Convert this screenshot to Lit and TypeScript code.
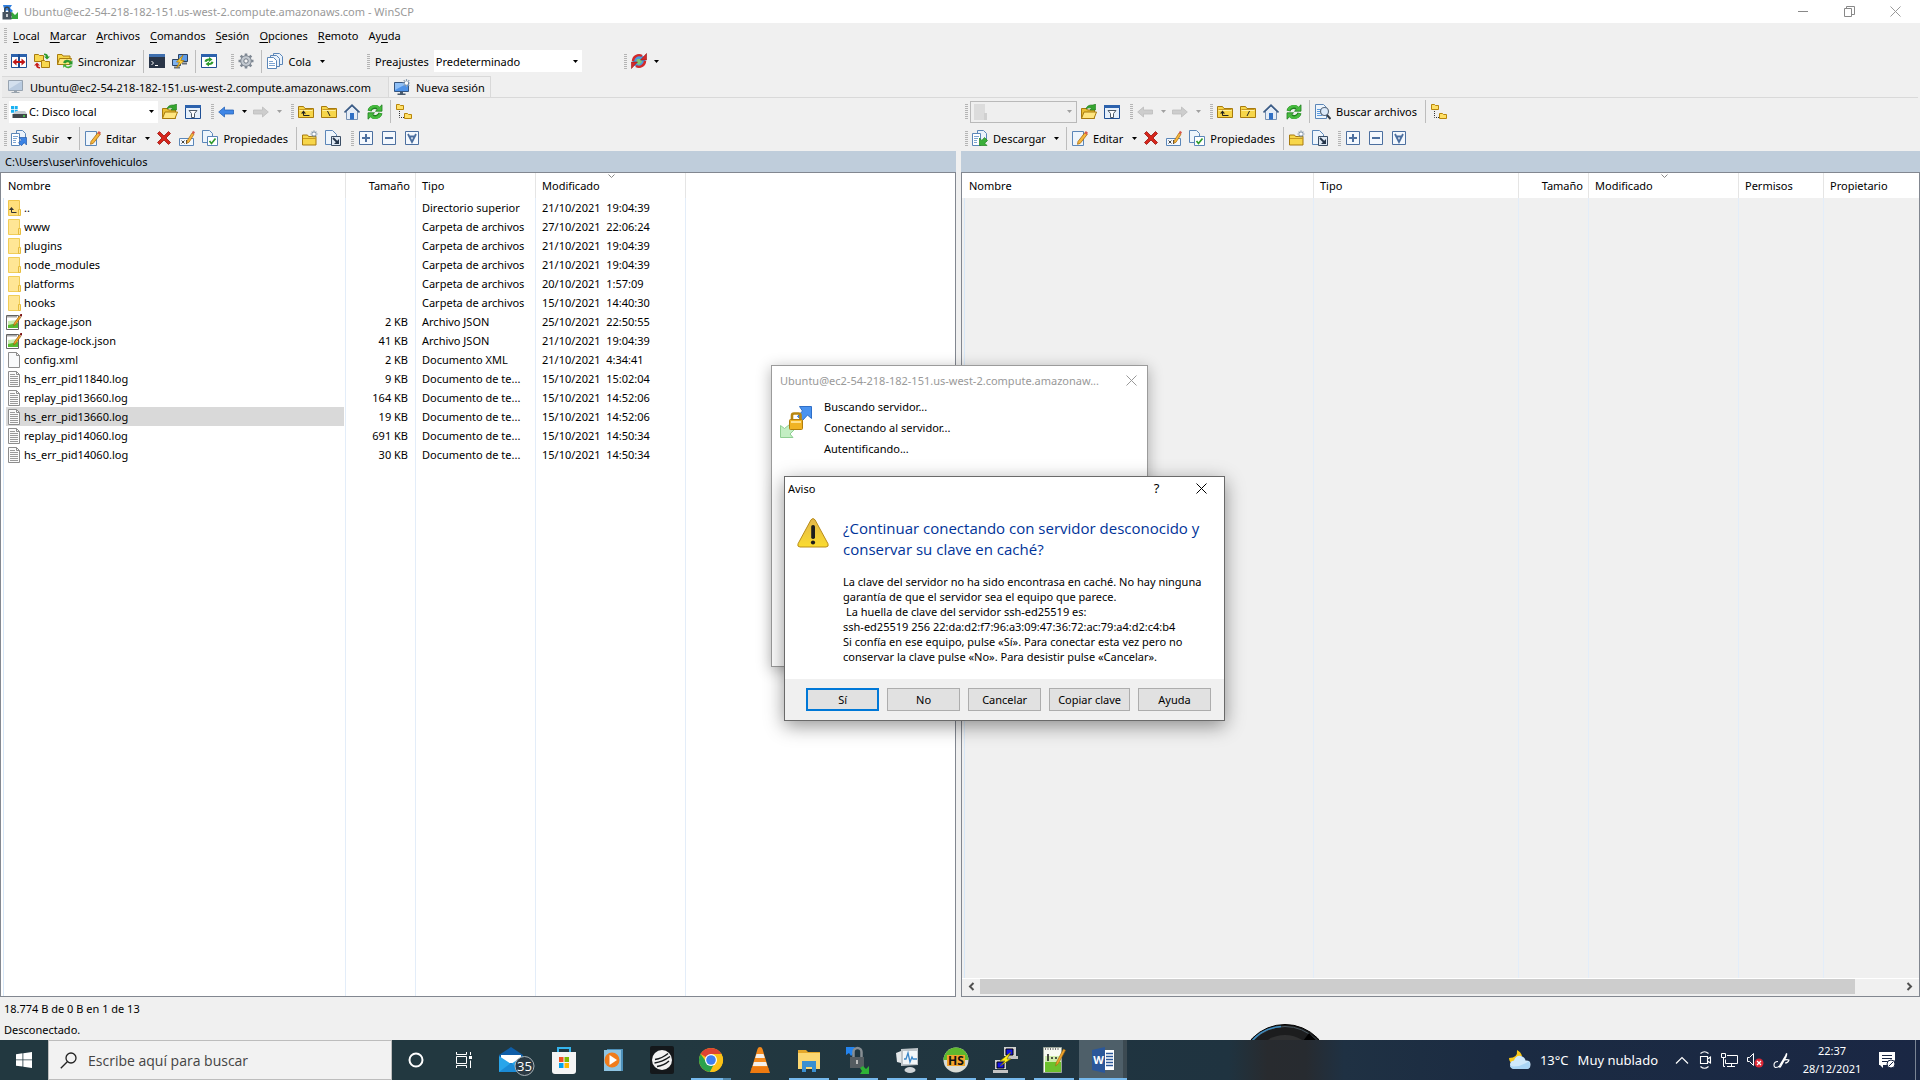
import { LitElement, html, svg, css, nothing, TemplateResult, SVGTemplateResult } from "lit";
import { customElement } from "lit/decorators.js";
import { classMap } from "lit/directives/class-map.js";

/* ---------- icon artwork, one entry per 16x16 glyph ---------- */

const folderBody = svg`<path d="M.5 13.5v-11h5l1.500 2h8.500v9z" fill="#f7d64a" stroke="#a87b0e"/><path d="M1.500 6.500h13" stroke="#fff0a0"/><path d="M1.500 5.500h13" stroke="#c99a1e"/>`;
const miniFolder = (x: number, y: number) =>
  svg`<path d="M${x + 0.5} ${y + 5.5}v-5h3l1 1h3v4z" fill="#ffe066" stroke="#b8860b"/>`;
const pencil = svg`<path d="M6 11.500l7-9 2.300 1.800-7 9-2.800 1z" fill="#f6b73c" stroke="#a9690d" stroke-width=".8"/><path d="M12.500 3l1.300-2 2.200 1.800-1.400 1.900z" fill="#d9584b"/>`;
const monitorBlue = svg`<path d="M.5 3.500h14v9H.5z" fill="#4f93e8" stroke="#35557f"/><path d="M1 4h13L1 11z" fill="#8fc0f7"/><path d="M6 13h3v1.500h2.500V16h-8v-1.500H6z" fill="#4a5b6e"/>`;
const cycle = (fill: string, edge: string) => svg`
  <path d="M2.500 7A5.500 5 0 0 1 11 4" fill="none" stroke="${edge}" stroke-width="4"/>
  <path d="M13.500 9A5.500 5 0 0 1 5 12" fill="none" stroke="${edge}" stroke-width="4"/>
  <path d="M15 .8v6.400H8.500z" fill="${fill}" stroke="${edge}" stroke-width=".8"/>
  <path d="M1 15.200V8.800h6.500z" fill="${fill}" stroke="${edge}" stroke-width=".8"/>
  <path d="M2.500 6.500A5.500 5 0 0 1 12 4" fill="none" stroke="${fill}" stroke-width="2.600"/>
  <path d="M13.500 9.500A5.500 5 0 0 1 4 12" fill="none" stroke="${fill}" stroke-width="2.600"/>`;

const icons: Record<string, SVGTemplateResult> = {
  app: svg`<path d="M1 1h9L8 4l3 3-3 2-3-3-2 2z" fill="#2f7fe0"/><path d="M16 15H8l2-2-2-3 2-2 3 3 3-3z" fill="#35a83c"/><path d="M2.800 8V5.500a2.200 2.200 0 0 1 4.400 0V8" fill="none" stroke="#3b4650" stroke-width="1.500"/><path d="M.5 8h9v7.500h-9z" fill="#46525e"/><path d="M4.300 10h1.400v3H4.300z" fill="#fff"/>`,
  compare: svg`<path d="M.5 1.500h15v13H.5z" fill="#fff" stroke="#1f4f94"/><path d="M0 1h16v3H0z" fill="#2c62ad"/><path d="M8 1v14" stroke="#1f4f94" stroke-width="2"/><path d="M1.500 9l4-3.500V8h5V5.500l4 3.500-4 3.500V10h-5v2.500z" fill="#c11616"/>`,
  syncFolders: svg`<path d="M.5 8.500v-7h4l1 1h4v6z" fill="#f8d84f" stroke="#a87b0e"/><path d="M7.500 14.500v-7h3l1 1h4v6z" fill="#f8d84f" stroke="#a87b0e"/><path d="M10 .5q4 0 4 3h2l-3 3-3-3h2q0-1.500-2-1.500z" fill="#2c9a2c"/><path d="M6 15.500q-4 0-4-3H0l3-3 3 3H4q0 1.500 2 1.500z" fill="#c81d1d"/>`,
  syncFolder: svg`<path d="M.5 11.500v-10h4.500l1 1.500h7v8.500z" fill="#f7d64a" stroke="#a87b0e"/><path d="M.5 11.500l2-6h12l-2 6z" fill="#ffe680" stroke="#a87b0e"/><path d="M6 9.500a4.500 4 0 0 1 8-1l1.500-1v4h-4l1.300-1.300a2.800 2.800 0 0 0-4.600.3z" fill="#2c9a2c"/><path d="M15.500 12.500a4.500 4 0 0 1-8 1L6.200 15v-3.500h4l-1.300 1.200a2.800 2.800 0 0 0 4.300-.2z" fill="#42b23b"/>`,
  terminal: svg`<path d="M0 1h16v14H0z" fill="#2a3547"/><path d="M0 1h16v3H0z" fill="#3f6fae"/><path d="M2.500 8l2 2-2 2M6 12.500h3" fill="none" stroke="#fff"/>`,
  putty: svg`<path d="M6.500 1.500h9v7h-9z" fill="#5d9be8" stroke="#2b4364"/><path d="M.5 6.500h8v6h-8z" fill="#7db2f2" stroke="#2b4364"/><path d="M2 14.500h6M10 10.500h5" stroke="#66707c" stroke-width="2"/><path d="M11 2L4.500 9h3l-3 6L12 7.500H8.800z" fill="#ffd23c" stroke="#b07a00" stroke-width=".7"/>`,
  refreshBox: svg`<path d="M.5 1.500h15v13H.5z" fill="#fff" stroke="#1f4f94"/><path d="M0 1h16v3H0z" fill="#2c62ad"/><path d="M3.500 8.500q.5-3 4.500-3V4l3.500 2.500L8 9V7.500Q6 7.500 5.500 9z" fill="#2c9a2c"/><path d="M12.500 9q-.5 3-4.500 3v1.500L4.500 11 8 8.500V10q2 0 2.500-1.500z" fill="#2c9a2c"/>`,
  gear: svg`<path d="M8 .5v15M.5 8h15M2.700 2.700l10.600 10.600M13.300 2.700L2.700 13.300" stroke="#7f8893" stroke-width="2.600"/><circle cx="8" cy="8" r="5.300" fill="#c3c9d0" stroke="#7f8893"/><circle cx="8" cy="8" r="2.200" fill="#f5f5f5" stroke="#6f7985"/>`,
  queue: svg`<path d="M6.500 .5h6l3 3v8h-9z" fill="#eaf2fb" stroke="#5b86b8"/><path d="M3.500 2.500h6l3 3v8h-9z" fill="#eaf2fb" stroke="#5b86b8"/><path d="M.5 4.500h6l3 3v8h-9z" fill="#fff" stroke="#5b86b8"/><path d="M2 8.500h4M2 10.500h6M2 12.500h6" stroke="#7ea5d2"/>`,
  globe: svg`<circle cx="8" cy="8" r="6.500" fill="#4b9be0"/><path d="M6 6h4l1 3-3 3-3-2z" fill="#7ccc7a"/><path d="M2 8A6 6 0 0 1 11 3M14 8A6 6 0 0 1 5 13" fill="none" stroke="#d42a2a" stroke-width="2.400"/><path d="M15.500 .5v6.500H9.500zM.5 15.500V9h6z" fill="#d42a2a" stroke="#981515" stroke-width=".6"/>`,
  monitorGrey: svg`<path d="M.5 1.500h14v10H.5z" fill="#b9cbe0" stroke="#97a3b0"/><path d="M1 2h13L1 10z" fill="#d3e0ee"/><path d="M6 12h3v1h2.500v1h-8v-1H6z" fill="#9aa4ae"/>`,
  monitorNew: svg`${monitorBlue}<path d="M12.500 0v8M8.500 4h8M9.700 1.200l5.600 5.600M15.300 1.200L9.700 6.800" stroke="#8ea0b2" stroke-width="1.200"/><circle cx="12.500" cy="4" r="1.700" fill="#fff"/>`,
  disk: svg`<path d="M0 2h3v3H0zM3.700 2h3v3h-3zM0 5.700h3v3H0zM3.700 5.700h3v3h-3z" fill="#19b1f2"/><path d="M3 9l2-2h9l2 3H2z" fill="#c6cbd0"/><path d="M1.500 10H16v4H1.500z" fill="#41464b"/><path d="M12 12h2" stroke="#4be04b" stroke-width="1.500"/>`,
  diskOff: svg`<path d="M1 0h11v16H1z" fill="#dcdcdc"/><path d="M11 9h3v7h-3z" fill="#d0d0d0"/>`,
  folderOpen: svg`<path d="M.5 14.500v-10h5l1 1.500h7v8.500z" fill="#e9bf35" stroke="#a87b0e"/><path d="M.5 14.500l2.500-6.500h12.500l-2.500 6.500z" fill="#ffe680" stroke="#a87b0e"/><path d="M5 5Q6 .5 12 1l2.500-1v6H9l1.700-1.700Q8 3 5 5z" fill="#35a52f" stroke="#1f7a1d" stroke-width=".6"/>`,
  filter: svg`<path d="M.5 1.500h15v13H.5z" fill="#e6f0fb" stroke="#1f4f94"/><path d="M0 1h16v3H0z" fill="#2c62ad"/><path d="M4 6.500h8L9.500 9.500v4h-3v-4z" fill="#fff" stroke="#4d5a69"/>`,
  back: svg`<path d="M.7 8L6.500 3v3h9v4h-9v3z" fill="#3f86e6" stroke="#2864b8" stroke-width=".8"/>`,
  backOff: svg`<path d="M.7 8L6.500 3v3h9v4h-9v3z" fill="#cdcdcd" stroke="#bdbdbd" stroke-width=".8"/>`,
  fwdOff: svg`<path d="M15.300 8L9.500 3v3h-9v4h9v3z" fill="#cdcdcd" stroke="#bdbdbd" stroke-width=".8"/>`,
  folderUp: svg`${folderBody}<path d="M5.500 7.500v4h6" fill="none" stroke="#222"/><path d="M3 9.500l2.500-3 2.500 3z" fill="#222"/>`,
  folderRoot: svg`${folderBody}<path d="M6.500 7l2.500 5" stroke="#222"/>`,
  folderSlash: svg`${folderBody}<path d="M9.500 7L7 12" stroke="#222"/>`,
  home: svg`<path d="M2.500 7v8.500h11V7L8 2z" fill="#e4ecf6" stroke="#7791b3"/><path d="M6 9h4v6.500H6z" fill="#2f6fc4"/><path d="M.5 8.500L8 1.200l7.500 7.300" fill="none" stroke="#3c5c86" stroke-width="1.600"/>`,
  refresh: cycle("#46bb3e", "#1f7f1e"),
  tree: svg`${miniFolder(0, 0)}${miniFolder(8, 9)}<path d="M3.500 7v6.500H8" fill="none" stroke="#333" stroke-dasharray="1 1"/>`,
  upload: svg`<path d="M5.500 .5h6l3 3v8h-9z" fill="#eaf2fb" stroke="#5b86b8"/><path d="M.5 3.500h8v12h-8z" fill="#fff" stroke="#5b86b8"/><path d="M2 6.500h5M2 8.500h4M2 10.500h3M2 12.500h3" stroke="#7ea5d2"/><path d="M8 7.500h7.500V15l-2.300-2.300-2.700 3-3-3 3-2.700z" fill="#3a82e4" stroke="#2359a8" stroke-width=".7"/>`,
  download: svg`<path d="M5.500 .5h6l3 3v8h-9z" fill="#eaf2fb" stroke="#5b86b8"/><path d="M.5 3.500h8v12h-8z" fill="#fff" stroke="#5b86b8"/><path d="M2 6.500h5M2 8.500h4M2 10.500h3M2 12.500h3" stroke="#7ea5d2"/><path d="M7.500 15.500H15l-2.300-2.300 2.800-2.700-3-3-2.700 3L7.500 8z" fill="#3bb03a" stroke="#1f7f1e" stroke-width=".7"/>`,
  edit: svg`<path d="M.5 1.500h11v14H.5z" fill="#eef5fc" stroke="#5b86b8"/>${pencil}`,
  remove: svg`<path d="M1.500 3.500L3.500 1.500 8 6l4.500-4.500 2 2L10 8l4.500 4.500-2 2L8 10l-4.500 4.500-2-2L6 8z" fill="#d8261c" stroke="#96130c" stroke-width=".8"/>`,
  rename: svg`<path d="M.5 8.500h14v7H.5z" fill="#f4f9ff" stroke="#5b86b8"/><path d="M2.500 10.500l3 3m0-3l-3 3M7.500 10v4" stroke="#333" stroke-width=".9"/><path d="M8 11l5-8 2 1.300-5 8-2.200 1z" fill="#f6b73c" stroke="#a9690d" stroke-width=".7"/><path d="M12.800 3L14 .8l2 1.400-1.200 2.100z" fill="#d9584b"/>`,
  props: svg`<path d="M.5 .5h7l3 3v9H.5z" fill="#eef5fc" stroke="#5b86b8"/><path d="M5.500 6.500h10v9h-10z" fill="#fff" stroke="#5b86b8"/><path d="M7.500 11l2 2.500 4-5" fill="none" stroke="#2f9a2c" stroke-width="1.700"/>`,
  folderNew: svg`<path d="M.5 15v-10h5l1 1.500h7.500v8.500z" fill="#f7d64a" stroke="#a87b0e"/><path d="M1 8.500h13" stroke="#c99a1e"/><path d="M12 .5v7M8.500 4h7M9.600 1.600l4.800 4.800M14.400 1.600L9.600 6.400" stroke="#8496a8" stroke-width="1.200"/><circle cx="12" cy="4" r="1.600" fill="#fff"/>`,
  shortcut: svg`<path d="M.5 .5h7l4 4v10H.5z" fill="#eef5fc" stroke="#5b86b8"/><path d="M6.500 6.500h9v9h-9z" fill="#dfe9f4" stroke="#3c4f66"/><path d="M8 8l5 5" stroke="#25354a" stroke-width="1.800"/><path d="M14 9v5H9z" fill="#25354a"/>`,
  plus: svg`<path d="M1.500 1.500h13v13h-13z" fill="#f4f8fd" stroke="#4c6f9f"/><path d="M8 4v8M4 8h8" stroke="#4c6f9f" stroke-width="2"/>`,
  minus: svg`<path d="M1.500 1.500h13v13h-13z" fill="#f4f8fd" stroke="#4c6f9f"/><path d="M4 8h8" stroke="#4c6f9f" stroke-width="2"/>`,
  invert: svg`<path d="M1.500 1.500h13v13h-13z" fill="#f4f8fd" stroke="#4c6f9f"/><path d="M4 4l4 8 4-8M5 6.500h6" fill="none" stroke="#4c6f9f" stroke-width="1.800"/>`,
  find: svg`<path d="M.5 .5h8l3 3v11H.5z" fill="#eef5fc" stroke="#5b86b8"/><path d="M2 5.500h4M2 7.500h3M2 9.500h3M2 11.500h5" stroke="#5b9be0"/><circle cx="9.500" cy="7.500" r="4" fill="#dceafa" stroke="#57677a" stroke-width="1.200"/><path d="M12 11l3.500 4" stroke="#333d49" stroke-width="2"/>`,
  dir: svg`<path d="M2.500 .5h11v15h-11z" fill="#ffe695" stroke="#f0cd57"/><path d="M12.500 9.500h2v6h-2z" fill="#ffe695" stroke="#e6bd3f"/>`,
  dirUp: svg`<path d="M2.500 .5h11v15h-11z" fill="#ffdf7c" stroke="#eec54b"/><path d="M12.500 9.500h2v6h-2z" fill="#ffe695" stroke="#e6bd3f"/><path d="M5.500 8v4.500h5" fill="none" stroke="#333"/><path d="M3 10l2.500-3 2.500 3z" fill="#333"/>`,
  json: svg`<path d="M.5 1.500h12v14H.5z" fill="#fff" stroke="#666"/><path d="M2 9l10-2v7H2z" fill="#57bb2e"/><path d="M2 7l10-1v3l-10 2z" fill="#c9ecb0"/><path d="M1.500 2.500h9" stroke="#555" stroke-width="2" stroke-dasharray="1 1"/><path d="M7.500 12l.8-3 5-7 1.600 1.200-5 7z" fill="#f4a321" stroke="#8d5a10" stroke-width=".6"/><path d="M13.600 1.500L14.500 0H16v2l-.6 .7z" fill="#7d1515"/>`,
  blank: svg`<path d="M2.500 .5h8l3 3v12h-11z" fill="#f9fafb" stroke="#8d8d8d"/><path d="M10.500 .5v3h3" fill="none" stroke="#8d8d8d"/>`,
  log: svg`<path d="M2.500 .5h8l3 3v12h-11z" fill="#fbfbfb" stroke="#8d8d8d"/><path d="M10.500 .5v3h3" fill="none" stroke="#8d8d8d"/><path d="M4 3.500h5M4 5.500h8M4 7.500h8M4 9.500h8M4 11.500h8M4 13.500h8" stroke="#9a9a9a"/>`,
};

const icon = (name: string): TemplateResult =>
  html`<svg class="ico" viewBox="0 0 16 16" aria-hidden="true">${icons[name]}</svg>`;

/* ---------- taskbar artwork, 28x28 ---------- */

const apps: { name: string; art: SVGTemplateResult; state?: string }[] = [
  { name: "Correo", art: svg`<path d="M-2 9L10 1l12 8v17H-2z" fill="#0f5ea8"/><path d="M0 9h20v8H0z" fill="#fff"/><path d="M-2 10l12 8 12-8v16H-2z" fill="#29a5ea"/><path d="M-2 26l12-9 12 9z" fill="#1b8bd6"/><circle cx="23.500" cy="20" r="9.500" fill="#2b3a44" stroke="#a9b3b8"/><text x="23.500" y="25" text-anchor="middle" class="badge">35</text>` },
  { name: "Microsoft Store", art: svg`<path d="M8 7V2h12v5" fill="none" stroke="#35b5ee" stroke-width="2"/><path d="M2 6h24v19q0 3-3 3H5q-3 0-3-3z" fill="#f4f4f4"/><path d="M9 11h4.500v5H9z" fill="#f25022"/><path d="M14.500 11H19v5h-4.500z" fill="#7fba00"/><path d="M9 17h4.500v5H9z" fill="#00a4ef"/><path d="M14.500 17H19v5h-4.500z" fill="#ffb900"/>` },
  { name: "Reproductor", art: svg`<path d="M8 3h16v22H8z" fill="#4d8fb8"/><path d="M5 4h17v21H5z" fill="#8fc4e2"/><circle cx="13" cy="14" r="7.500" fill="#f07c1c"/><path d="M10.500 9l7.500 5-7.500 5z" fill="#fff"/>` },
  { name: "Sonido", art: svg`<rect x="2" y="0" width="24" height="28" rx="2" fill="#14181b"/><circle cx="14" cy="14" r="10" fill="#f2f2f2"/><path d="M7 13.500q7-1 13-6M6.500 17q8-1 15.500-6.500M9 20.500q7-1 12-5.500" fill="none" stroke="#14181b" stroke-width="1.500"/>` },
  { name: "Chrome", state: "multi", art: svg`<circle cx="14" cy="14" r="12" fill="#fbc116"/><path d="M14 14L3.600 8A12 12 0 0 1 24.400 8z" fill="#df4332"/><path d="M3.600 8A12 12 0 0 0 13 26l5-10-8 1z" fill="#2ba24c"/><path d="M14 8h10.400A12 12 0 0 1 13 26l5.500-10z" fill="#fbc116"/><circle cx="14" cy="14" r="6" fill="#fff"/><circle cx="14" cy="14" r="4.800" fill="#3f7ff0"/>` },
  { name: "VLC", art: svg`<path d="M14 1q2 0 2.500 2l6 20h-17l6-20Q12 1 14 1z" fill="#f58a1c"/><path d="M10.500 8h7l1.300 4H9.200zM8 16h12l1.300 4H6.700z" fill="#f4f0ea"/><path d="M6 21h16l2 6H4z" fill="#ee7a10"/>` },
  { name: "Explorador", state: "open", art: svg`<path d="M3 4h8l2 2h12v4H3z" fill="#e5a82b"/><path d="M3 7h22v16H3z" fill="#fcd771"/><path d="M7 15h14v11h-4v-5h-6v5H7z" fill="#3a8fd0"/>` },
  { name: "WinSCP", state: "open", art: svg`<path d="M2 1h9L9 4l1 3-3 3-2-3-3 2z" fill="#2484ee"/><path d="M9.500 12V6a4 4 0 0 1 8 0v6" fill="none" stroke="#878e93" stroke-width="2.500"/><path d="M6 11h14v11H6z" fill="#555c61"/><path d="M12 14h2v4h-2z" fill="#bbb"/><path d="M25 28H16l2-3-2-3 3-2 3 3 3-3z" fill="#2eb135"/>` },
  { name: "Monitor", state: "open", art: svg`<path d="M8 3l17-1v17L8 20z" fill="#bfc5c9"/><path d="M10 5h14v13H10z" fill="#f2f6f8"/><path d="M11 13h2l2-6 2 9 2-5 1 2h4" fill="none" stroke="#3a86c8" stroke-width="1.300"/><ellipse cx="17" cy="24" rx="5.500" ry="3" fill="#cfd4d7"/><path d="M3 7l5-2v12l-4-1z" fill="#e4e8ea"/>` },
  { name: "HeidiSQL", state: "open", art: svg`<circle cx="14" cy="14" r="12.500" fill="#d9dcd6"/><path d="M1.500 14a12.500 12.500 0 0 1 25 0z" fill="#5fb82e"/><path d="M5 9h18v11H5z" fill="#f3a52c"/><text x="14" y="19" text-anchor="middle" class="hs">HS</text>` },
  { name: "PuTTY", state: "open", art: svg`<path d="M13 1h12v9H13zM4 14h11v9H4z" fill="#d0d0d0"/><path d="M15 3h7v6h-7zM6 16h7v6H6z" fill="#1414e6" stroke="#000"/><path d="M14 10h13v3H14zM2 24h15v3H2z" fill="#c4c4c4"/><path d="M20 6L9 15h5l-5 5 11-7h-4z" fill="#ffee1a" stroke="#6d6400" stroke-width=".6"/>` },
  { name: "Notepad++", state: "open", art: svg`<path d="M3.500 1.500h18v25h-18z" fill="#f7faf2" stroke="#9ba59a"/><path d="M5 15h16v11H5z" fill="#6dc12d"/><path d="M5 10h16v6H5z" fill="#cfedac"/><path d="M8 8v7M11 12h2M15 12h2" stroke="#222" stroke-width="1.600"/><path d="M5 3h14" stroke="#777" stroke-width="2" stroke-dasharray="1 1.500"/><path d="M15.500 20l1-4 7-13 2 1.300-7 13z" fill="#f0a32b" stroke="#9b6413" stroke-width=".6"/>` },
  { name: "Word", state: "active", art: svg`<path d="M15 4h10v20H15z" fill="#fff"/><path d="M17 7.500h7M17 10.500h7M17 13.500h7M17 16.500h7M17 19.500h7" stroke="#2b579a" stroke-width="1.400"/><path d="M3 4l13-3v26L3 24z" fill="#2b579a"/><text x="9.500" y="18" text-anchor="middle" class="ww">W</text>` },
];

/* ---------- data ---------- */

type Item =
  | { k: "grip" | "sep" | "gap" | "gap wide" }
  | { k: "btn"; icon: string; label: string; text?: boolean; off?: boolean }
  | { k: "arrow"; label: string; off?: boolean };

const grip: Item = { k: "grip" };
const sep: Item = { k: "sep" };
const gap: Item = { k: "gap" };
const wideGap: Item = { k: "gap wide" };
const b = (i: string, label: string, off = false): Item => ({ k: "btn", icon: i, label, off });
const t = (i: string, label: string): Item => ({ k: "btn", icon: i, label, text: true });
const arrow = (label: string, off = false): Item => ({ k: "arrow", label, off });

const menus = ["Local", "Marcar", "Archivos", "Comandos", "Sesión", "Opciones", "Remoto", "Ayuda"];

const mainBar: Item[] = [
  grip, b("compare", "Comparar directorios"), b("syncFolders", "Sincronizar directorios"), t("syncFolder", "Sincronizar"), sep,
  b("terminal", "Abrir terminal"), b("putty", "Abrir en PuTTY"), sep, b("refreshBox", "Sincronizar exploración"), wideGap,
  grip, b("gear", "Preferencias"), sep, t("queue", "Cola"), arrow("Opciones de cola"),
];

const fileBar = (first: Item): Item[] => [
  grip, first, arrow("Opciones de transferencia"), sep, t("edit", "Editar"), arrow("Opciones de edición"),
  b("remove", "Eliminar"), b("rename", "Renombrar"), t("props", "Propiedades"), sep,
  b("folderNew", "Nueva carpeta"), b("shortcut", "Nuevo enlace"), gap,
  grip, b("plus", "Seleccionar"), b("minus", "Deseleccionar"), b("invert", "Invertir selección"),
];

const navBar = (back: Item, slash: string, extra: Item[]): Item[] => [
  gap, grip, back, arrow("Historial anterior", back.k === "btn" && !!back.off), b("fwdOff", "Adelante", true), arrow("Historial siguiente", true), gap,
  grip, b("folderUp", "Directorio superior"), b(slash, "Directorio raíz"), b("home", "Inicio"), b("refresh", "Actualizar"), sep,
  ...extra, b("tree", "Árbol"),
];

interface Row { i: string; n: string; s: string; t: string; d: string; sel?: boolean }
const rows: Row[] = [
  { i: "dirUp", n: "..", s: "", t: "Directorio superior", d: "21/10/2021  19:04:39" },
  { i: "dir", n: "www", s: "", t: "Carpeta de archivos", d: "27/10/2021  22:06:24" },
  { i: "dir", n: "plugins", s: "", t: "Carpeta de archivos", d: "21/10/2021  19:04:39" },
  { i: "dir", n: "node_modules", s: "", t: "Carpeta de archivos", d: "21/10/2021  19:04:39" },
  { i: "dir", n: "platforms", s: "", t: "Carpeta de archivos", d: "20/10/2021  1:57:09" },
  { i: "dir", n: "hooks", s: "", t: "Carpeta de archivos", d: "15/10/2021  14:40:30" },
  { i: "json", n: "package.json", s: "2 KB", t: "Archivo JSON", d: "25/10/2021  22:50:55" },
  { i: "json", n: "package-lock.json", s: "41 KB", t: "Archivo JSON", d: "21/10/2021  19:04:39" },
  { i: "blank", n: "config.xml", s: "2 KB", t: "Documento XML", d: "21/10/2021  4:34:41" },
  { i: "log", n: "hs_err_pid11840.log", s: "9 KB", t: "Documento de te...", d: "15/10/2021  15:02:04" },
  { i: "log", n: "replay_pid13660.log", s: "164 KB", t: "Documento de te...", d: "15/10/2021  14:52:06" },
  { i: "log", n: "hs_err_pid13660.log", s: "19 KB", t: "Documento de te...", d: "15/10/2021  14:52:06", sel: true },
  { i: "log", n: "replay_pid14060.log", s: "691 KB", t: "Documento de te...", d: "15/10/2021  14:50:34" },
  { i: "log", n: "hs_err_pid14060.log", s: "30 KB", t: "Documento de te...", d: "15/10/2021  14:50:34" },
];

const session = "Ubuntu@ec2-54-218-182-151.us-west-2.compute.amazonaws.com";
const cross = html`<svg class="cross" viewBox="0 0 11 11" aria-hidden="true"><path d="M.5 .5l10 10M10.500 .5l-10 10" stroke="currentColor" fill="none"/></svg>`;
const caret = html`<svg class="caret" viewBox="0 0 5 3" aria-hidden="true"><path d="M0 0h5L2.500 3z" fill="currentColor"/></svg>`;
const sortMark = html`<svg class="sort" viewBox="0 0 7 4" aria-hidden="true"><path d="M.5 .5l3 3 3-3" stroke="#888" fill="none"/></svg>`;

@customElement("app-root")
export class AppRoot extends LitElement {
  static styles = css`
    :host { display: block; --ui: "Noto Sans", "Open Sans", "Liberation Sans", sans-serif; --big: "Open Sans", "Noto Sans", "Liberation Sans", sans-serif; }
    * { box-sizing: border-box; }
    button, select, input { font: inherit; color: inherit; border: 0; border-radius: 0; padding: 0; margin: 0; background: none; }
    .app { position: relative; display: flex; flex-direction: column; min-height: 100vh; background: #f0f0f0; color: #000;
      font: 11px/15px var(--ui); white-space: nowrap; overflow: hidden; }
    svg { display: block; flex: none; }
    .ico { width: 16px; height: 16px; }
    .cross { width: 11px; height: 11px; }
    .caret { width: 5px; height: 3px; }

    .title { display: flex; align-items: center; gap: 6px; height: 23px; padding-left: 2px; background: #fff; color: #999; }
    .title h1 { flex: 1; margin: 0; font-size: inherit; font-weight: 400; }
    .winbtns { display: flex; padding-right: 2px; }
    .winbtn { width: 46px; height: 20px; display: grid; place-items: center; }
    .menu { display: flex; align-items: center; height: 25px; padding-left: 4px; }
    .menu button { padding: 0 5px; }
    .menu u { text-underline-offset: 2px; }

    .bar { display: flex; align-items: center; height: 27px; padding-left: 4px; }
    .bar.slim { height: 26px; }
    .grip { width: 3px; height: 15px; margin-right: 1px; background: repeating-linear-gradient(#b4b4b4 0 1px, transparent 1px 2px); }
    .sep { width: 1px; height: 23px; margin: 0 2px 0 3px; background: #bdbdbd; }
    .gap { width: 6px; }
    .gap.wide { width: 10px; }
    .tool { display: flex; align-items: center; gap: 5px; height: 22px; padding: 0 4px 0 3px; }
    .tool.text { padding-right: 5px; }
    .drop { display: grid; place-items: center; width: 12px; height: 22px; }
    .off { color: #a0a0a0; }
    .presets { display: flex; align-items: center; margin-left: 39px; }
    .presets label { margin: 0 5px 0 4px; }
    .combo { display: grid; grid-template-columns: 22px 1fr 13px; align-items: center; height: 22px; background: #fff; color: #000; }
    .combo select { grid-area: 1 / 1 / 2 / 4; height: 22px; padding-left: 20px; appearance: none; outline: 0; }
    .combo .ico { grid-area: 1 / 1; margin-left: 2px; pointer-events: none; z-index: 1; }
    .combo .caret { grid-area: 1 / 3; justify-self: center; pointer-events: none; z-index: 1; }
    .combo.preset { width: 148px; }
    .combo.preset select { padding-left: 2px; }
    .combo.drive { width: 149px; margin: 0 1px; }
    .combo.remote { width: 107px; margin: 0 1px; background: #efefef; border: 1px solid #b9b9b9; color: #a0a0a0; }
    .combo.remote select { height: 20px; }
    .update { display: flex; align-items: center; margin-left: 42px; }

    .tabs { display: flex; height: 22px; margin: 2px 2px 0; border-bottom: 1px solid #d9d9d9; }
    .tab { display: flex; align-items: center; gap: 6px; padding: 0 5px; border: solid #d9d9d9; border-width: 1px 1px 0 0; }
    .tab.current { min-width: 387px; padding-left: 6px; background: #eaeaea; }

    .panes { flex: 1; display: grid; grid-template-columns: 956fr 959fr; column-gap: 5px; }
    .pane { display: flex; flex-direction: column; min-width: 0; }
    .path { height: 21px; padding: 0 5px; line-height: 21px; background: #bfcddb; }
    .list { flex: 1; display: grid; grid-template-rows: 1fr; border: 1px solid #828790; background: #fff; }
    .list.empty { grid-template-rows: 1fr 18px; background: #f0f0f0; }
    table { width: 100%; height: 100%; table-layout: fixed; border-collapse: separate; border-spacing: 0; }
    th { position: relative; height: 25px; padding: 0 6px; background: #fff; border-right: 1px solid #e5e5e5; font-weight: 400; text-align: left; }
    th:first-child { padding-left: 7px; }
    td { height: 19px; padding: 0 6px; border-right: 1px solid #e3edf9; white-space: pre; }
    th:last-child, td:last-child { border-right: 0; }
    td:first-child { padding: 0 1px 0 5px; background: linear-gradient(#d8e8f8, #d8e8f8) 2px 0 / 1px 100% no-repeat; }
    .filler td { height: auto; }
    th.num { padding-right: 5px; text-align: right; }
    td.num { padding-right: 7px; text-align: right; }
    .cell { display: flex; align-items: center; gap: 2px; height: 19px; }
    .cell.sel { background: #d9d9d9; }
    .sort { position: absolute; top: 1px; left: calc(50% - 3px); width: 7px; height: 4px; }
    .c-name { width: 345px; } .c-size { width: 70px; } .c-type { width: 120px; } .c-date { width: 150px; }
    .r-name { width: 352px; } .r-type { width: 205px; } .r-perm { width: 85px; }
    .scroll { display: grid; grid-template-columns: 17px 1fr 17px; align-items: center; justify-items: center; padding: 0 1px 2px; border-top: 1px solid #fff; color: #505050; }
    .thumb { justify-self: start; width: 95%; height: 15px; background: #cdcdcd; }
    .scroll svg { width: 7px; height: 9px; }
    .status { padding: 1px 4px 0; line-height: 21px; }
    .status p { margin: 0; }

    .dialog { position: absolute; display: flex; flex-direction: column; background: #fff; }
    .progress { left: calc(50% - 189px); top: calc(50% - 175px); width: 377px; min-height: 302px; border: 1px solid #9b9b9b; box-shadow: 0 3px 14px rgba(0, 0, 0, .3); }
    .dtitle { display: flex; align-items: center; justify-content: space-between; height: 28px; padding: 0 10px 0 8px; color: #999; }
    .dtitle h2, .warn h2, .warn h3 { margin: 0; font-weight: 400; font-size: inherit; }
    .steps { display: flex; gap: 12px; padding: 2px 8px 0; line-height: 21px; }
    .steps ul { margin: 0; padding: 0; list-style: none; }
    .steps svg { width: 32px; height: 32px; margin-top: 10px; }
    .warn { left: calc(50% - 176px); top: calc(50% - 64px); width: 441px; border: 1px solid #6a6a6a; box-shadow: 0 5px 18px rgba(0, 0, 0, .42); }
    .wtitle { display: flex; align-items: center; height: 23px; padding-left: 3px; }
    .wtitle h2 { flex: 1; }
    .wtitle button { display: grid; place-items: center; width: 45px; height: 22px; }
    .wtitle button:first-of-type { font-size: 13px; }
    .wbody { display: flex; gap: 14px; padding: 18px 12px 15px; }
    .wbody svg { width: 32px; height: 30px; }
    .warn h3 { margin-bottom: 14px; font: 15px/21px var(--big); color: #003399; }
    .wbody p { margin: 0; white-space: pre; }
    .wfoot { display: flex; gap: 8px; padding: 9px 13px; justify-content: flex-end; background: #f0f0f0; }
    .wfoot button { min-width: 73px; height: 23px; padding: 0 8px; background: #e1e1e1; border: 1px solid #adadad; }
    .wfoot .primary { border: 2px solid #0078d7; }

    .taskbar { position: relative; display: flex; align-items: stretch; height: 40px; color: #fff;
      background: linear-gradient(90deg, #223840 0, #223840 35%, #1f3340 64%, #282b2f 66%, #272b30 68%, #1f3143 70%, #1b2b42 78%, #1a2744 100%); }
    .puck { position: absolute; bottom: 100%; left: calc(65% + 1px); width: 72px; height: 16px; }
    .tb { display: grid; place-items: center; width: 48px; }
    .search { display: flex; align-items: center; gap: 11px; width: 344px; padding-left: 11px; background: #f2f2f2; border: 1px solid #bdbdbd; color: #222; }
    .search input { flex: 1; min-width: 0; font: 14px var(--big); outline: 0; }
    .search input::placeholder { color: #444; opacity: 1; }
    .apps { display: flex; gap: 1px; margin-left: 3px; flex: 1; }
    .apps .tb { border: solid transparent; border-width: 2px 0; }
    .apps svg { width: 28px; height: 28px; overflow: visible; }
    .apps .open { background: linear-gradient(#76b9ed, #76b9ed) 50% 100% / 40px 2px no-repeat border-box; }
    .apps .multi { background: linear-gradient(90deg, #76b9ed 32px, #5087ab 32px) 50% 100% / 40px 2px no-repeat border-box; }
    .apps .active { background: linear-gradient(#76b9ed, #76b9ed) 0 100% / 100% 2px no-repeat border-box, linear-gradient(90deg, #4e5f69 44px, #3c4a52 44px) border-box; }
    .badge { font: 13px var(--big); fill: #fff; }
    .hs { font: 700 12px var(--big); fill: #111; }
    .ww { font: 700 11px var(--big); fill: #fff; }
    .tray { display: flex; align-items: center; }
    .weather { display: flex; align-items: center; gap: 9px; padding-right: 17px; font-size: 13px; }
    .trayicons { display: flex; align-items: center; gap: 9px; }
    .clock { width: 84px; margin-right: 5px; font-size: 11px; line-height: 18px; text-align: center; }
    .peek { width: 5px; height: 40px; border-left: 1px solid #7a8494; margin-left: 19px; }
  `;

  private bar(items: Item[]) {
    return items.map((it) => {
      if (it.k === "btn")
        return html`<button class=${classMap({ tool: true, text: !!it.text, off: !!it.off })} aria-label=${it.label} ?disabled=${!!it.off}>
          ${icon(it.icon)}${it.text ? html`<span>${it.label}</span>` : nothing}
        </button>`;
      if (it.k === "arrow")
        return html`<button class=${classMap({ drop: true, off: !!it.off })} aria-label=${it.label} ?disabled=${!!it.off}>${caret}</button>`;
      return html`<span class=${it.k}></span>`;
    });
  }

  private menuLabel(m: string) {
    const at = m === "Ayuda" ? 2 : 0;
    return html`<button>${m.slice(0, at)}<u>${m[at]}</u>${m.slice(at + 1)}</button>`;
  }

  private localPane() {
    return html`<section class="pane" aria-label="Panel local">
      <div class="bar">
        <span class="grip"></span>
        <div class="combo drive">
          ${icon("disk")}<select aria-label="Unidad"><option>C: Disco local</option></select>${caret}
        </div>
        ${this.bar([b("folderOpen", "Abrir directorio"), b("filter", "Filtro"), ...navBar(b("back", "Atrás"), "folderRoot", [])])}
      </div>
      <div class="bar slim">${this.bar(fileBar(t("upload", "Subir")))}</div>
      <div class="path">C:\\Users\\user\\infovehiculos</div>
      <div class="list">
        <table>
          <colgroup><col class="c-name" /><col class="c-size" /><col class="c-type" /><col class="c-date" /><col /></colgroup>
          <thead><tr><th>Nombre</th><th class="num">Tamaño</th><th>Tipo</th><th>Modificado${sortMark}</th><th></th></tr></thead>
          <tbody>
            ${rows.map((r) => html`<tr>
              <td><div class=${classMap({ cell: true, sel: !!r.sel })}>${icon(r.i)}<span>${r.n}</span></div></td>
              <td class="num">${r.s}</td><td>${r.t}</td><td>${r.d}</td><td></td>
            </tr>`)}
            <tr class="filler"><td></td><td></td><td></td><td></td><td></td></tr>
          </tbody>
        </table>
      </div>
    </section>`;
  }

  private remotePane() {
    return html`<section class="pane" aria-label="Panel remoto">
      <div class="bar">
        <span class="grip"></span>
        <div class="combo remote">
          ${icon("diskOff")}<select aria-label="Directorio remoto" disabled></select>${caret}
        </div>
        ${this.bar([b("folderOpen", "Abrir directorio"), b("filter", "Filtro"), ...navBar(b("backOff", "Atrás", true), "folderSlash", [t("find", "Buscar archivos"), sep])])}
      </div>
      <div class="bar slim">${this.bar(fileBar(t("download", "Descargar")))}</div>
      <div class="path"></div>
      <div class="list empty">
        <table>
          <colgroup><col class="r-name" /><col class="r-type" /><col class="c-size" /><col class="c-date" /><col class="r-perm" /><col /></colgroup>
          <thead><tr><th>Nombre</th><th>Tipo</th><th class="num">Tamaño</th><th>Modificado${sortMark}</th><th>Permisos</th><th>Propietario</th></tr></thead>
          <tbody><tr class="filler"><td></td><td></td><td></td><td></td><td></td><td></td></tr></tbody>
        </table>
        <div class="scroll">
          <svg viewBox="0 0 7 9"><path d="M5.500 1L2 4.500 5.500 8" fill="none" stroke="currentColor" stroke-width="2"/></svg>
          <div class="thumb"></div>
          <svg viewBox="0 0 7 9"><path d="M1.500 1L5 4.500 1.500 8" fill="none" stroke="currentColor" stroke-width="2"/></svg>
        </div>
      </div>
    </section>`;
  }

  private dialogs() {
    return html`
      <section class="dialog progress" role="dialog" aria-label="Conexión">
        <div class="dtitle"><h2>Ubuntu@ec2-54-218-182-151.us-west-2.compute.amazonaw...</h2><button aria-label="Cerrar conexión">${cross}</button></div>
        <div class="steps">
          <svg viewBox="0 0 32 32" aria-hidden="true">
            <path d="M19.500 .5h12v12l-4-3.500-5 5.500-5-4 5-5.500z" fill="#4a93f0" stroke="#2f6fc8"/>
            <path d="M.5 19.500l4 3 5-4 5 5-4.500 4.500 3 3.500H.5z" fill="#c3eec3" stroke="#8fce92"/>
            <path d="M12 15V9.500Q12 7.500 14 7.500h4.500q2 0 2 2V15" fill="none" stroke="#b8860f" stroke-width="2.600"/>
            <rect x="9.500" y="13.500" width="13" height="10" rx="1" fill="#f0b323" stroke="#b27d0c"/>
            <path d="M11 16h10" stroke="#ffe08a" stroke-width="2"/>
          </svg>
          <ul><li>Buscando servidor...</li><li>Conectando al servidor...</li><li>Autentificando...</li></ul>
        </div>
      </section>
      <section class="dialog warn" role="alertdialog" aria-label="Aviso">
        <div class="wtitle"><h2>Aviso</h2><button aria-label="Ayuda contextual">?</button><button aria-label="Cerrar aviso">${cross}</button></div>
        <div class="wbody">
          <svg viewBox="0 0 32 30" aria-hidden="true">
            <defs><linearGradient id="wg" x1="0" y1="0" x2="0" y2="1"><stop offset="0" stop-color="#e2b64a"/><stop offset="1" stop-color="#fbdc2f"/></linearGradient></defs>
            <path d="M14 1.800q2-2.600 4 0l13 24q1 3-2 3.200H3q-3-.2-2-3.200z" fill="url(#wg)" stroke="#b98d1b"/>
            <rect x="14.200" y="7" width="3.800" height="14" rx="1.800" fill="#1d1d1d"/><circle cx="16" cy="24.500" r="2.100" fill="#1d1d1d"/>
          </svg>
          <div>
            <h3>¿Continuar conectando con servidor desconocido y<br />conservar su clave en caché?</h3>
            <p>La clave del servidor no ha sido encontrasa en caché. No hay ninguna<br />garantía de que el servidor sea el equipo que parece.<br />${" "}La huella de clave del servidor ssh-ed25519 es:<br />ssh-ed25519 256 22:da:d2:f7:96:a3:09:47:36:72:ac:79:a4:d2:c4:b4<br />Si confía en ese equipo, pulse «Sí». Para conectar esta vez pero no<br />conservar la clave pulse «No». Para desistir pulse «Cancelar».</p>
          </div>
        </div>
        <div class="wfoot"><button class="primary">Sí</button><button>No</button><button>Cancelar</button><button>Copiar clave</button><button>Ayuda</button></div>
      </section>`;
  }

  private taskbar() {
    return html`<footer class="taskbar">
      <svg class="puck" viewBox="0 0 72 16" aria-hidden="true">
        <circle cx="36" cy="46" r="45.500" fill="#1c1d1e" stroke="#000"/><circle cx="36" cy="46" r="43.500" fill="none" stroke="#4b5a63"/>
        <path d="M3 17Q14 4 32 2.500" fill="none" stroke="#3f8fc4" stroke-width="1.500"/><ellipse cx="36" cy="26" rx="23" ry="15" fill="#303132"/><path d="M54 17l6-8 8 8z" fill="#000"/>
      </svg>
      <button class="tb" aria-label="Inicio"><svg width="16" height="16" viewBox="0 0 16 16"><path d="M0 2.200L6.500 1.300v6.200H0zM7.300 1.200L16 0v7.500H7.300zM0 8.300h6.500v6.300L0 13.700zM7.300 8.300H16V16l-8.700-1.200z" fill="#fff"/></svg></button>
      <div class="search">
        <svg width="17" height="17" viewBox="0 0 17 17"><circle cx="11" cy="6" r="5" fill="none" stroke="#222" stroke-width="1.300"/><path d="M7.300 9.700L.8 16.200" stroke="#222" stroke-width="1.300"/></svg>
        <input aria-label="Buscar" placeholder="Escribe aquí para buscar" />
      </div>
      <button class="tb" aria-label="Cortana"><svg width="16" height="16" viewBox="0 0 16 16"><circle cx="8" cy="8" r="6.500" fill="none" stroke="#fff" stroke-width="2"/></svg></button>
      <button class="tb" aria-label="Vista de tareas"><svg width="16" height="16" viewBox="0 0 16 16"><path d="M.5 0v2.500h10V0M.5 16v-2.500h10V16M.5 4.500h10v7H.5zM14.500 0v3M14.500 8.500V16" fill="none" stroke="#fff"/><path d="M13 4h3v3h-3z" fill="#fff"/></svg></button>
      <nav class="apps">
        ${apps.map((a) => html`<button class=${"tb " + (a.state ?? "")} aria-label=${a.name}><svg viewBox="0 0 28 28">${a.art}</svg></button>`)}
      </nav>
      <div class="tray">
        <div class="weather">
          <svg width="22" height="20" viewBox="0 0 22 20"><path d="M8 0q1 8-8 8 0 5 5 6l8-8Q12 2 8 0z" fill="#fbc918"/><path d="M6 19q-5 0-5-4.500Q1 11 5 10.500 7 5 12 6q4 1 4.500 4.500Q21.500 10 21.500 14.500T17 19z" fill="#cfe9fb"/><path d="M6 19q-4 0-5-3 9 2 19-5 3 8-3 8z" fill="#a9d5f5"/></svg>
          <span>13°C</span><span>Muy nublado</span>
        </div>
        <div class="trayicons">
          <svg width="14" height="8" viewBox="0 0 14 8"><path d="M1 7.500l6-6 6 6" fill="none" stroke="#fff" stroke-width="1.200"/></svg>
          <svg width="14" height="18" viewBox="0 0 14 18"><path d="M2.500 2.500Q6.500-1 10.500 2.500M2.500 15.500q4 3.500 8 0M2.500 5.500h7v7h-7zM9.500 8l3-2v6l-3-2" fill="none" stroke="#fff" stroke-width="1.100"/></svg>
          <svg width="17" height="15" viewBox="0 0 17 15"><path d="M6 2.500h10.500v8H4.500V6.500M10.500 10.500v3M6 13.500h8M.5 .5h4v4h-4zM2.500 4.500v9H4" fill="none" stroke="#fff"/></svg>
          <svg width="17" height="16" viewBox="0 0 17 16"><path d="M.5 5.500h2l4-4v12l-4-4h-2z" fill="none" stroke="#fff"/><circle cx="12" cy="11" r="4.500" fill="#dc2634"/><path d="M10 9l4 4M14 9l-4 4" stroke="#fff" stroke-width="1.200"/></svg>
          <svg width="17" height="17" viewBox="0 0 17 17"><path d="M5 9.500Q1 9.500 1 13t4 2q2-1 4.500-4.500T13 2.500Q14.500 0 13 5L8 14Q6 17 7 13l6-10M10 9q3-2 6-1-1 3-4 3" fill="none" stroke="#fff" stroke-width="1.100"/></svg>
        </div>
        <div class="clock">22:37<br />28/12/2021</div>
        <svg width="17" height="17" viewBox="0 0 17 17"><path d="M0 0h16v8l-5 5H4v3l-3-3H0z" fill="#fff"/><path d="M3 3.500h10M3 6.500h10M3 9.500h6" stroke="#1a2744"/><circle cx="12" cy="12" r="4" fill="#fff" stroke="#1a2744"/><path d="M10 14l4-4" stroke="#1a2744"/></svg>
        <div class="peek"></div>
      </div>
    </footer>`;
  }

  render() {
    return html`<div class="app">
      <header class="title">
        ${icon("app")}<h1>${session} - WinSCP</h1>
        <div class="winbtns">
          <button class="winbtn" aria-label="Minimizar"><svg width="11" height="11" viewBox="0 0 11 11"><path d="M0 5.500h10" stroke="#888"/></svg></button>
          <button class="winbtn" aria-label="Restaurar"><svg width="11" height="11" viewBox="0 0 11 11"><path d="M.5 2.500h7v8h-7zM2.500 2.500v-2h8v8h-3" fill="none" stroke="#888"/></svg></button>
          <button class="winbtn" aria-label="Cerrar">${cross}</button>
        </div>
      </header>
      <nav class="menu"><span class="grip"></span>${menus.map((m) => this.menuLabel(m))}</nav>
      <div class="bar slim">
        ${this.bar(mainBar)}
        <div class="presets">
          <span class="grip"></span><label for="preset">Preajustes</label>
          <div class="combo preset"><select id="preset"><option>Predeterminado</option></select>${caret}</div>
        </div>
        <div class="update">${this.bar([grip, b("globe", "Buscar actualizaciones"), arrow("Opciones de actualización")])}</div>
      </div>
      <div class="tabs">
        <button class="tab current">${icon("monitorGrey")}<span>${session}</span></button>
        <button class="tab">${icon("monitorNew")}<span>Nueva sesión</span></button>
      </div>
      <main class="panes">${this.localPane()}${this.remotePane()}</main>
      <div class="status"><p>18.774 B de 0 B en 1 de 13</p><p>Desconectado.</p></div>
      ${this.taskbar()}${this.dialogs()}
    </div>`;
  }
}
